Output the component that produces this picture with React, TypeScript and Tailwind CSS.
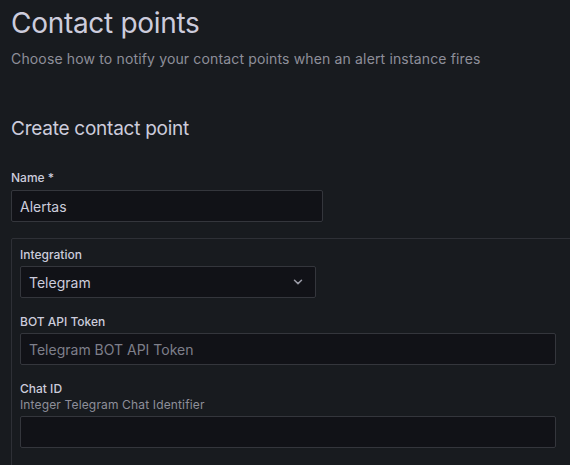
import React from "react";

function Label({ children }: { children: React.ReactNode }) {
  return (
    <div className="text-[12px] leading-[16px] font-medium text-[#ccccdc]">{children}</div>
  );
}

export default function App() {
  return (
    <div
      className="w-[570px] h-[465px] overflow-hidden bg-[#181b1f] text-[#ccccdc] pl-[11px] pt-[6px]"
      style={{ fontFamily: "Inter, 'Noto Sans', sans-serif" }}
    >
      <h1 className="text-[28px] leading-[34px] font-normal tracking-[-0.3px] text-[#ccccdc]">Contact points</h1>
      <p className="mt-[9px] text-[14px] leading-[20px] tracking-[0.15px] text-[#8e8f9a]">
        Choose how to notify your contact points when an alert instance fires
      </p>
      <h3 className="mt-[48px] text-[19px] leading-[24px] font-normal tracking-[-0.25px] text-[#ccccdc]">
        Create contact point
      </h3>
      <div className="mt-[29px]">
        <Label>Name *</Label>
        <div className="mt-[4px] w-[312px] h-[32px] bg-[#111217] border border-[#34363c] rounded-[2px] flex items-center px-[8px] text-[14px] text-[#ccccdc]">
          Alertas
        </div>
      </div>
      <div className="mt-[16px] w-[620px] border border-[#2e3036] rounded-[2px] pt-[8px] px-[8px] pb-[20px]">
        <Label>Integration</Label>
        <div className="mt-[3px] w-[296px] h-[32px] bg-[#111217] border border-[#34363c] rounded-[2px] flex items-center justify-between pl-[8px] pr-[12px] text-[14px] text-[#ccccdc]">
          <span>Telegram</span>
          <svg width="10" height="6" viewBox="0 0 10 6" fill="none">
            <path d="M1.5 1.2 L5 4.6 L8.5 1.2" stroke="#9a9ba6" strokeWidth="1.5" strokeLinecap="round" strokeLinejoin="round" />
          </svg>
        </div>
        <div className="mt-[16px]">
          <Label>BOT API Token</Label>
          <div className="mt-[3px] w-[536px] h-[32px] bg-[#111217] border border-[#34363c] rounded-[2px] flex items-center px-[8px] text-[14px] text-[#7e7f8a]">
            Telegram BOT API Token
          </div>
        </div>
        <div className="mt-[16px]">
          <Label>Chat ID</Label>
          <div className="text-[12px] leading-[16px] tracking-[0.15px] text-[#8e8f9a]">Integer Telegram Chat Identifier</div>
          <div className="mt-[3px] w-[536px] h-[32px] bg-[#111217] border border-[#34363c] rounded-[2px]" />
        </div>
      </div>
    </div>
  );
}
